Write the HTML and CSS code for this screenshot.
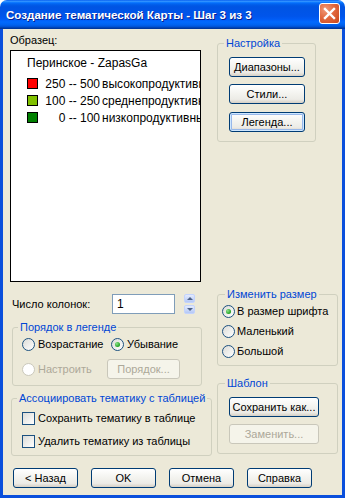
FILE: index.html
```html
<!DOCTYPE html>
<html>
<head>
    <meta charset="utf-8" />
    <title>Создание тематической Карты - Шаг 3 из 3</title>
    <link rel="stylesheet" href="styles.css">
</head>
<body>
<div class="window">
    <div class="titlebar">
        <span class="title">Создание тематической Карты - Шаг 3 из 3</span>
        <span class="close">
            <svg width="13" height="13" viewBox="0 0 13 13"><path d="M2 2 L11 11 M11 2 L2 11" stroke="#fff" stroke-width="2.4" stroke-linecap="square" fill="none"/></svg>
        </span>
    </div>
    <div class="frame">
        <div class="client">
            <div class="main">
                <div class="col-left">
                    <div class="caption">Образец:</div>
                    <div class="preview">
                        <div class="preview-title">Перинское - ZapasGa</div>
                        <div class="legend-row"><span class="swatch sw-red"></span><span class="range">250 -- 500</span><span class="name">высокопродуктивные</span></div>
                        <div class="legend-row"><span class="swatch sw-lime"></span><span class="range">100 -- 250</span><span class="name">среднепродуктивные</span></div>
                        <div class="legend-row"><span class="swatch sw-green"></span><span class="range">0 -- 100</span><span class="name">низкопродуктивные</span></div>
                    </div>
                    <div class="cols-row">
                        <span class="cols-label">Число колонок:</span>
                        <span class="field">1</span>
                        <span class="spin">
                            <span class="spin-btn"><span class="arr-up"></span></span>
                            <span class="spin-btn"><span class="arr-down"></span></span>
                        </span>
                    </div>
                    <fieldset class="group order">
                        <legend>Порядок в легенде</legend>
                        <div class="order-row first">
                            <span class="opt w89"><span class="radio"></span>Возрастание</span>
                            <span class="opt"><span class="radio on"></span>Убывание</span>
                        </div>
                        <div class="order-row second">
                            <span class="opt w85 off"><span class="radio"></span>Настроить</span>
                            <button class="btn order-btn" disabled>Порядок...</button>
                        </div>
                    </fieldset>
                    <fieldset class="group assoc">
                        <legend>Ассоциировать тематику с таблицей</legend>
                        <div class="check-row first"><span class="check"></span>Сохранить тематику в таблице</div>
                        <div class="check-row second"><span class="check"></span>Удалить тематику из таблицы</div>
                    </fieldset>
                </div>
                <div class="col-right">
                    <fieldset class="group setup">
                        <legend>Настройка</legend>
                        <button class="btn setup-btn b1">Диапазоны...</button>
                        <button class="btn setup-btn b2">Стили...</button>
                        <button class="btn setup-btn b3 default">Легенда...</button>
                    </fieldset>
                    <fieldset class="group size">
                        <legend>Изменить размер</legend>
                        <div class="size-row first"><span class="radio on"></span>В размер шрифта</div>
                        <div class="size-row"><span class="radio"></span>Маленький</div>
                        <div class="size-row"><span class="radio"></span>Большой</div>
                    </fieldset>
                    <fieldset class="group templ">
                        <legend>Шаблон</legend>
                        <button class="btn templ-btn b1">Сохранить как...</button>
                        <button class="btn templ-btn b2" disabled>Заменить...</button>
                    </fieldset>
                </div>
            </div>
            <div class="footer">
                <button class="btn foot-btn">&lt; Назад</button>
                <button class="btn foot-btn">OK</button>
                <button class="btn foot-btn">Отмена</button>
                <button class="btn foot-btn">Справка</button>
            </div>
        </div>
    </div>
</div>
</body>
</html>
```

FILE: styles.css
```css
* {
    margin: 0;
    padding: 0;
    box-sizing: border-box;
}

html, body {
    width: 345px;
    height: 498px;
    overflow: hidden;
}

body {
    background: #fff;
    font-family: "Liberation Sans", Arial, sans-serif;
    font-size: 11px;
    color: #000;
}

.window {
    width: 345px;
    height: 498px;
    display: flex;
    flex-direction: column;
}

/* title bar */
.titlebar {
    height: 29px;
    flex-shrink: 0;
    display: flex;
    justify-content: space-between;
    align-items: flex-start;
    padding: 0 5px 0 6px;
    border-radius: 7px 7px 0 0;
    background: linear-gradient(to bottom, #0058EE 0%, #3593FF 4%, #288EFF 6%, #127DFF 8%, #036FFC 10%, #0262EE 14%, #0057E5 20%, #0054E3 24%, #0055EB 56%, #005BF5 66%, #026AFE 76%, #0062EF 86%, #0052D6 92%, #0040AB 96%, #003092 100%);
}

.title {
    color: #fff;
    font-weight: bold;
    font-size: 11.6px;
    line-height: 15px;
    margin-top: 7px;
    text-shadow: 1px 1px 0 #0A1E8C;
    white-space: nowrap;
}

.close {
    width: 21px;
    height: 21px;
    margin-top: 3px;
    border: 1px solid #fff;
    border-radius: 3px;
    background: radial-gradient(circle at 30% 30%, #F09A7A 0%, #E2693F 45%, #C8461B 100%);
    display: flex;
    align-items: center;
    justify-content: center;
}

.frame {
    flex: 1;
    min-height: 0;
    border: 3px solid #0A4FDC;
    border-top: 0;
}

.client {
    height: 100%;
    background: #ECE9D8;
    padding-left: 7px;
    overflow: hidden;
}

.main {
    display: flex;
}

.col-left {
    width: 202px;
    flex-shrink: 0;
}

.col-right {
    width: 121px;
    flex-shrink: 0;
    margin-left: 5px;
}

/* preview */
.caption {
    margin-top: 5px;
    line-height: 13px;
}

.preview {
    margin-top: 3px;
    width: 191px;
    height: 232px;
    background: #fff;
    border: 1px solid #000;
    padding: 5px 0 0 16px;
    overflow: hidden;
    white-space: nowrap;
    font-size: 12px;
}

.preview-title {
    line-height: 15px;
    margin-bottom: 4px;
}

.legend-row {
    height: 17px;
    display: flex;
    align-items: center;
}

.swatch {
    flex-shrink: 0;
    width: 11px;
    height: 11px;
    border: 1px solid #000;
    margin-right: 7px;
}

.sw-red { background: #FF0000; }
.sw-lime { background: #80C000; }
.sw-green { background: #008000; }

.range {
    flex-shrink: 0;
    width: 55px;
    text-align: right;
    margin-right: 2px;
}

.name {
    flex-shrink: 0;
}

/* columns */
.cols-row {
    margin-top: 11px;
    height: 22px;
    display: flex;
    align-items: center;
}

.cols-label {
    width: 100px;
    margin-left: 2px;
}

.field {
    width: 63px;
    height: 20px;
    background: #fff;
    border: 1px solid #7F9DB9;
    padding-left: 4px;
    line-height: 18px;
    font-size: 12px;
}

.spin {
    margin-left: 9px;
    display: flex;
    flex-direction: column;
    gap: 2px;
}

.spin-btn {
    width: 11px;
    height: 9px;
    border: 1px solid #C3D3FD;
    border-radius: 2px;
    background: linear-gradient(#E4EBFD, #B4C8F6);
    display: flex;
    align-items: center;
    justify-content: center;
}

.arr-up {
    border-left: 3px solid transparent;
    border-right: 3px solid transparent;
    border-bottom: 3px solid #4D6185;
}

.arr-down {
    border-left: 3px solid transparent;
    border-right: 3px solid transparent;
    border-top: 3px solid #4D6185;
}

/* group boxes */
.group {
    border: 1px solid #D0D0BF;
    border-radius: 3px;
    min-width: 0;
}

.group legend {
    color: #0046D5;
    line-height: 13px;
    padding: 0 2px;
    margin: 0 auto 0 5px;
    white-space: nowrap;
    text-align: left;
}

.order {
    margin: 6px 0 0 2px;
    width: 190px;
    padding: 0 0 6px 0;
}

.order-row {
    height: 20px;
    padding-left: 9px;
    display: flex;
    align-items: center;
}

.order-row.second {
    margin-top: 5px;
}

.opt {
    display: flex;
    align-items: center;
}

.opt.off {
    color: #ACA899;
}

.w89 { width: 89px; }
.w85 { width: 85px; }

.assoc {
    margin: 6px 0 0 1px;
    width: 201px;
    padding: 0 0 6px 0;
}

.assoc legend {
    margin-left: 5px;
}

.check-row {
    height: 16px;
    padding-left: 10px;
    display: flex;
    align-items: center;
}

.check-row.first { margin-top: 5px; }
.check-row.second { margin-top: 7px; }

.check {
    width: 13px;
    height: 13px;
    border: 1px solid #1C5180;
    background: linear-gradient(135deg, #DCDCD7, #fff);
    margin-right: 3px;
}

.radio {
    flex-shrink: 0;
    width: 13px;
    height: 13px;
    border: 1px solid #1C5180;
    border-radius: 50%;
    background: linear-gradient(135deg, #DCDCD7, #fff);
    margin-right: 3px;
    display: flex;
    align-items: center;
    justify-content: center;
}

.radio.on::after {
    content: "";
    width: 5px;
    height: 5px;
    border-radius: 50%;
    background: radial-gradient(circle at 35% 35%, #8BE28B, #21A121 70%);
}

.off .radio {
    border-color: #CAC8BB;
    background: #fff;
}

/* buttons */
.btn {
    height: 20px;
    border: 1px solid #003C74;
    border-radius: 3px;
    background: linear-gradient(#FFFFFF, #F4F4F0 45%, #ECEBE6 80%, #D6D0C5);
    font-family: "Liberation Sans", Arial, sans-serif;
    font-size: 11px;
    color: #000;
    display: flex;
    align-items: center;
    justify-content: center;
}

.btn.default {
    box-shadow: inset 0 0 0 1px #CEE7FF, inset 0 0 0 2px #98B8EA;
}

.btn:disabled {
    border-color: #C9C7BA;
    background: #F5F4EA;
    color: #ACA899;
}

.order-btn {
    width: 73px;
}

.setup {
    margin-top: 8px;
    width: 99px;
    padding: 0 0 9px 0;
}

.setup legend {
    margin-left: 6px;
}

.setup-btn {
    width: 76px;
    margin-left: 11px;
}

.setup-btn.b1 { margin-top: 7px; }
.setup-btn.b2 { margin-top: 7px; }
.setup-btn.b3 { margin-top: 8px; }

.size {
    margin-top: 146px;
    width: 121px;
    padding: 0 0 4px 0;
}

.size legend,
.templ legend {
    margin-left: 7px;
}

.size-row {
    height: 20px;
    padding-left: 4px;
    display: flex;
    align-items: center;
}

.size-row .radio {
    margin-right: 2px;
}

.templ {
    margin-top: 11px;
    width: 121px;
    padding: 0 0 9px 0;
}

.templ-btn {
    width: 90px;
    margin-left: 11px;
}

.templ-btn.b1 { margin-top: 7px; }
.templ-btn.b2 { margin-top: 7px; }

.footer {
    margin-top: 12px;
    padding-left: 3px;
    display: flex;
    gap: 13px;
}

.foot-btn {
    width: 65px;
}
```
